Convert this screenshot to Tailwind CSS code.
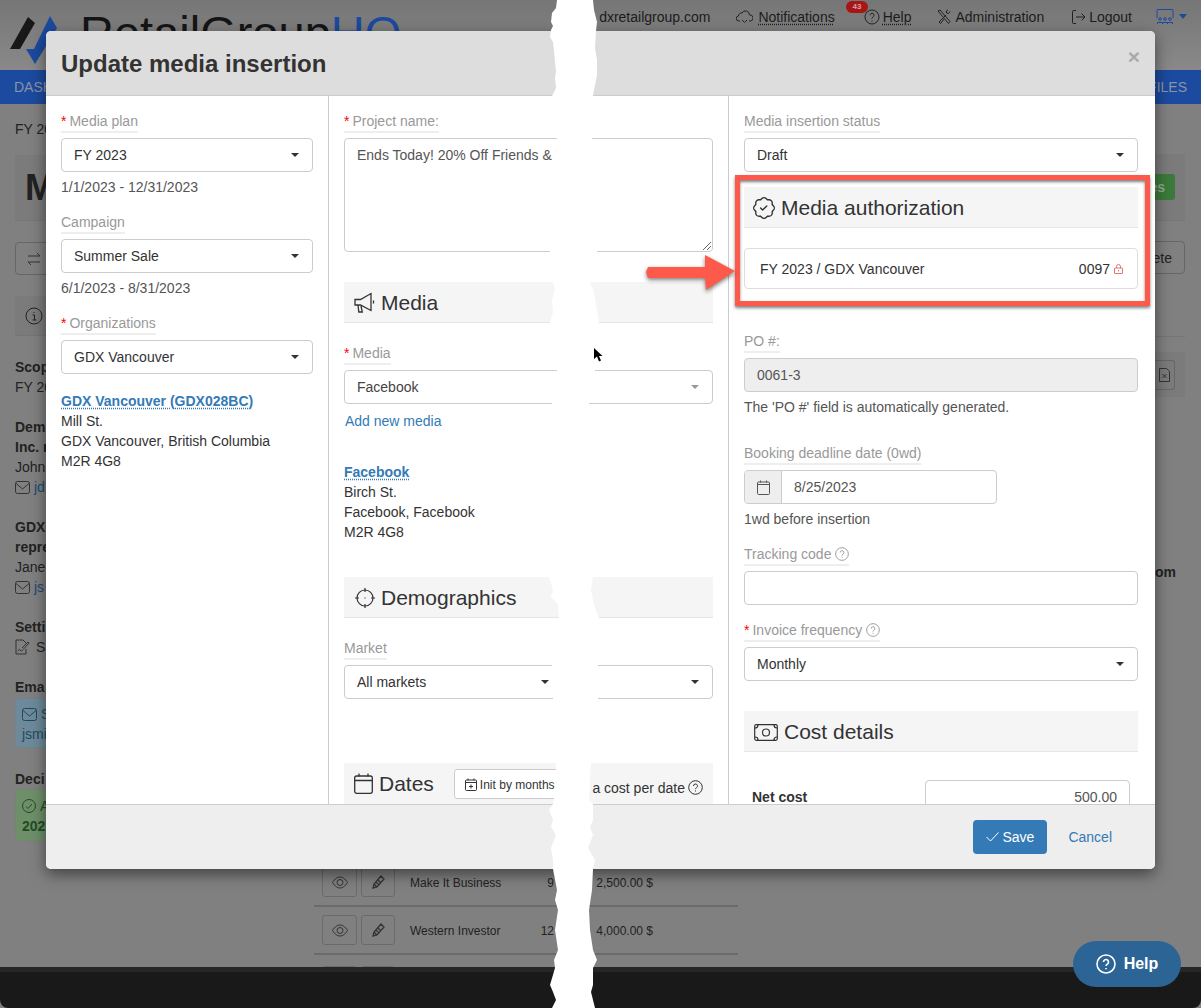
<!DOCTYPE html>
<html lang="en">
<head>
    <meta charset="UTF-8">
    <meta name="viewport" content="width=device-width, initial-scale=1.0">
    <title>Update media insertion</title>
    <script src="https://cdn.jsdelivr.net/npm/@tailwindcss/browser@4"></script>
</head>
<body class="bg-white">
<div class="relative w-[1201px] h-[1008px] overflow-hidden bg-[#808080] font-['Liberation_Sans',Arial,sans-serif] text-[14px] leading-[20px] text-[#222]">

    <!-- page behind the dialog -->
    <header class="h-[70px] flex bg-linear-to-b from-[#767676] to-[#898989] pl-[10px] pr-[14px]">
        <svg class="mt-0 w-[60px] h-[70px] shrink-0" viewBox="0 0 60 70">
            <polygon points="0,49 18,17 25,23 10,49" fill="#181818"/>
            <polygon points="16,49 24,49 40,16 47,28 25,64" fill="#1c4a9e"/>
        </svg>
        <div class="ml-[10px] mt-[6px] text-[47px] leading-[54px] text-[#151515] whitespace-nowrap">RetailGroup<span class="text-[#1c4a9e]">HQ</span></div>
        <div class="ml-auto flex items-start pt-[7px] text-[#1c1c1c]">
            <span class="mr-[26px]">dxretailgroup.com</span>
            <svg class="w-[17px] h-[17px] mt-[1px] mr-[5px]" viewBox="0 0 17 17" fill="none" stroke="#222"><path d="M4 13H3a2.5 2.5 0 0 1-.5-5A3 3 0 0 1 6 5a4 4 0 0 1 7.5 2 3 3 0 0 1 1 6H13M6 12l2.500 2.500L11 12"/></svg>
            <span class="underline decoration-dotted underline-offset-2 mr-[29px]">Notifications</span>
            <svg class="w-[16px] h-[16px] mt-[2px] mr-[3px]" viewBox="0 0 16 16" fill="none" stroke="#222"><circle cx="8" cy="8" r="7"/><path d="M6 6.200a2 2 0 1 1 3 1.800c-.7.400-1 .8-1 1.600M8 11.500v1"/></svg>
            <span class="underline decoration-dotted underline-offset-2 mr-[26px]">Help</span>
            <svg class="w-[15px] h-[16px] mt-[2px] mr-[3px]" viewBox="0 0 15 16" fill="none" stroke="#222"><path d="M1 2l2-1 10 11.500-1.500 2L1 2zM13 2.500l-1.500 2-2-.5-.2-2L11 .8M9 6l-7 7 1.500 1.500L7 10"/></svg>
            <span class="mr-[27px]">Administration</span>
            <svg class="w-[15px] h-[16px] mt-[2px] mr-[3px]" viewBox="0 0 15 16" fill="none" stroke="#222"><path d="M5 1.500H2.500a1 1 0 0 0-1 1v11a1 1 0 0 0 1 1H5M5 8h9M10.500 4.500 14 8l-3.500 3.500"/></svg>
            <span class="mr-[24px]">Logout</span>
            <svg class="w-[18px] h-[18px] mt-[1px] mr-[5px]" viewBox="0 0 18 18" fill="none" stroke="#1c4a9e"><path d="M1 10V2.500a1 1 0 0 1 1-1h14a1 1 0 0 1 1 1V10"/><circle cx="4" cy="11" r="1.300"/><circle cx="9" cy="11" r="1.300"/><circle cx="14" cy="11" r="1.300"/><path d="M1.500 16v-1.500h5V16M6.500 16v-1.500h5V16M11.500 16v-1.500h5V16"/></svg>
            <span class="mt-[7px] border-x-[4px] border-t-[5px] border-x-transparent border-t-[#1c4a9e]"></span>
        </div>
    </header>

    <nav class="h-[34px] bg-[#1c4a9e] flex items-center justify-between pl-[14px] pr-[14px] text-[#8a93a8]">
        <span>DASH</span>
        <span>FILES</span>
    </nav>

    <main class="h-[863px] overflow-hidden flex pl-[15px]">
        <div class="w-[285px] shrink-0 pt-[15px]">
            <p>FY 20</p>
            <div class="mt-[16px] h-[66px] border-b border-[#757575] bg-[#7b7b7b] pl-[10px] flex items-center text-[36px] font-bold">M</div>
            <div class="mt-[21px] w-[100px] h-[33px] border border-[#666] rounded-[4px] flex items-center pl-[11px]">
                <svg class="w-[14px] h-[14px]" viewBox="0 0 14 14" fill="none" stroke="#333"><path d="M1 4h12M10 1l3 3M13 10H1M4 13l-3-3"/></svg>
            </div>
            <div class="mt-[21px] h-[40px] border-b border-[#757575] bg-[#7b7b7b] pl-[10px] flex items-center">
                <svg class="w-[18px] h-[18px]" viewBox="0 0 18 18" fill="none" stroke="#222"><circle cx="9" cy="9" r="8"/><path d="M7.500 8H9.500V13M7.500 13h4M9 5v1"/></svg>
            </div>
            <p class="mt-[21px] font-bold">Scop</p>
            <p>FY 20</p>
            <p class="mt-[20px] font-bold">Dem<br>Inc. r</p>
            <p>John</p>
            <p class="flex items-center"><svg class="w-[15px] h-[13px] mr-[4px]" viewBox="0 0 15 13" fill="none" stroke="#333"><rect x=".5" y=".5" width="14" height="12" rx="2"/><path d="M1 2.500 7.500 8 14 2.500"/></svg><span class="text-[#1c4a70]">jd</span></p>
            <p class="mt-[20px] font-bold">GDX<br>repre</p>
            <p>Jane</p>
            <p class="flex items-center"><svg class="w-[15px] h-[13px] mr-[4px]" viewBox="0 0 15 13" fill="none" stroke="#333"><rect x=".5" y=".5" width="14" height="12" rx="2"/><path d="M1 2.500 7.500 8 14 2.500"/></svg><span class="text-[#1c4a70]">js</span></p>
            <p class="mt-[20px] font-bold">Setti</p>
            <p class="flex items-center"><svg class="w-[15px] h-[16px] mr-[6px]" viewBox="0 0 15 16" fill="none" stroke="#333"><path d="M11 10v5H1V1h7l3 3M3 12c1-2 2-2 2.500-.5S8 11 14 4l-1-1-6 6"/></svg>S</p>
            <p class="mt-[20px] font-bold">Ema</p>
            <div class="mt-[1px] h-[50px] px-[6px] py-[5px] rounded-[4px] border border-[#6c8494] bg-[#6e8a9a] text-[#1d4a60]">
                <p class="flex items-center"><svg class="w-[15px] h-[13px] mr-[4px]" viewBox="0 0 15 13" fill="none" stroke="#1d4a60"><rect x=".5" y=".5" width="14" height="12" rx="2"/><path d="M1 2.500 7.500 8 14 2.500"/></svg>S</p>
                <p>jsmi</p>
            </div>
            <p class="mt-[21px] font-bold">Deci</p>
            <div class="h-[52px] px-[6px] py-[6px] rounded-[4px] border border-[#6f8a6a] bg-[#6f8f6b] text-[#1f4d1f]">
                <p class="flex items-center"><svg class="w-[14px] h-[14px] mr-[4px]" viewBox="0 0 14 14" fill="none" stroke="#1f4d1f"><circle cx="7" cy="7" r="6.500"/><path d="M4 7.500l2 2 4-4.500"/></svg>A</p>
                <p class="font-bold">202</p>
            </div>
        </div>

        <div class="w-[424px] shrink-0 ml-[14px] pt-[755px] text-[12px]">
            <div class="h-[48px] border-b-2 border-[#6b6b6b] flex items-center px-[8px]">
                <span class="w-[35px] h-[30px] border border-[#6a6a6a] rounded-[3px] flex items-center justify-center"><svg class="w-[16px] h-[13px]" viewBox="0 0 16 13" fill="none" stroke="#333"><path d="M.5 6.500C3 2.500 5.500 1 8 1s5 1.500 7.500 5.500C13 10.500 10.500 12 8 12S3 10.500 .5 6.500z"/><circle cx="8" cy="6.500" r="3"/></svg></span>
                <span class="ml-[4px] w-[34px] h-[30px] border border-[#6a6a6a] rounded-[3px] flex items-center justify-center"><svg class="w-[13px] h-[14px]" viewBox="0 0 13 14" fill="none" stroke="#333" stroke-width="1.300"><path d="M1 13l1-4 7-8 3 3-7 8-4 1zM2 9l3 3M4 7l3 3M6 5l3 3"/></svg></span>
                <span class="mt-[1px] ml-[15px] w-[110px]">Make It Business</span>
                <span class="mt-[1px] w-[48px] text-right">9 %</span>
                <span class="mt-[1px] w-[85px] text-right">2,500.00 $</span>
            </div>
            <div class="h-[48px] border-b-2 border-[#6b6b6b] flex items-center px-[8px]">
                <span class="w-[35px] h-[30px] border border-[#6a6a6a] rounded-[3px] flex items-center justify-center"><svg class="w-[16px] h-[13px]" viewBox="0 0 16 13" fill="none" stroke="#333"><path d="M.5 6.500C3 2.500 5.500 1 8 1s5 1.500 7.500 5.500C13 10.500 10.500 12 8 12S3 10.500 .5 6.500z"/><circle cx="8" cy="6.500" r="3"/></svg></span>
                <span class="ml-[4px] w-[34px] h-[30px] border border-[#6a6a6a] rounded-[3px] flex items-center justify-center"><svg class="w-[13px] h-[14px]" viewBox="0 0 13 14" fill="none" stroke="#333" stroke-width="1.300"><path d="M1 13l1-4 7-8 3 3-7 8-4 1zM2 9l3 3M4 7l3 3M6 5l3 3"/></svg></span>
                <span class="mt-[1px] ml-[15px] w-[110px]">Western Investor</span>
                <span class="mt-[1px] w-[48px] text-right">12 %</span>
                <span class="mt-[1px] w-[85px] text-right">4,000.00 $</span>
            </div>
            <div class="h-[48px] flex items-start pt-[11px] px-[8px]">
                <span class="w-[35px] h-[30px] border border-[#6a6a6a] rounded-[3px]"></span>
                <span class="ml-[4px] w-[34px] h-[30px] border border-[#6a6a6a] rounded-[3px]"></span>
            </div>
        </div>

        <div class="w-[448px] shrink-0 pt-[50px] pr-[1px]">
            <div class="h-[67px] bg-[#7b7b7b] border-b border-[#757575] flex items-center justify-end pr-[10px]">
                <span class="h-[26px] px-[10px] rounded-[3px] bg-[#3c7a3c] text-[#8fa98f] font-bold flex items-center">es</span>
            </div>
            <div class="mt-[20px] flex justify-end">
                <span class="h-[33px] pl-[10px] pr-[12px] border border-[#666] rounded-[4px] flex items-center">ete</span>
            </div>
            <div class="mt-[62px] h-[1px] bg-[#757575]"></div>
            <div class="mt-[15px] h-[45px] bg-[#7b7b7b] flex items-center justify-end pr-[10px]">
                <span class="w-[20px] h-[30px] border border-[#666] border-l-0 rounded-r-[3px] flex items-center justify-center"><svg class="w-[11px] h-[14px]" viewBox="0 0 11 14" fill="none" stroke="#333"><path d="M.5.5h7l3 3v10H.5zM3.500 6l4 4M7.500 6l-4 4"/></svg></span>
            </div>
            <p class="mt-[165px] pr-[9px] text-right font-bold">com</p>
        </div>
    </main>

    <footer class="h-[41px] rounded-b-[8px] bg-[#191919] border-t-[5px] border-[#262626]"></footer>

    <!-- dialog -->
    <div class="absolute left-[46px] top-[31px] w-[1109px] h-[838px] flex flex-col bg-white rounded-[5px] overflow-hidden shadow-[0_5px_15px_rgba(0,0,0,0.5)]">
        <div class="h-[65px] shrink-0 bg-[#ddd] border-b border-[#ccc] flex items-center justify-between pl-[15px] pr-[15px]">
            <h1 class="mt-[2px] text-[24px] font-bold text-[#333]">Update media insertion</h1>
            <span class="-mt-[12px] text-[21px] font-bold text-[#aaa]">×</span>
        </div>

        <div class="h-[708px] shrink-0 overflow-hidden flex text-[#333]">
            <!-- left column -->
            <section class="w-[283px] shrink-0 border-r border-[#ccc] px-[15px] pt-[15px]">
                <label class="inline-block align-top border-b-2 border-[#eee] text-[#999]"><span class="text-[#f00] mr-[3px]">*</span>Media plan</label>
                <div class="mt-[5px] h-[34px] border border-[#ccc] rounded-[4px] flex items-center justify-between pl-[12px] pr-[13px]">FY 2023<span class="border-x-[4px] border-t-[4px] border-x-transparent border-t-[#333]"></span></div>
                <p class="mt-[5px] text-[#555]">1/1/2023 - 12/31/2023</p>

                <label class="mt-[15px] inline-block align-top border-b-2 border-[#eee] text-[#999]">Campaign</label>
                <div class="mt-[5px] h-[34px] border border-[#ccc] rounded-[4px] flex items-center justify-between pl-[12px] pr-[13px]">Summer Sale<span class="border-x-[4px] border-t-[4px] border-x-transparent border-t-[#333]"></span></div>
                <p class="mt-[5px] text-[#555]">6/1/2023 - 8/31/2023</p>

                <label class="mt-[15px] inline-block align-top border-b-2 border-[#eee] text-[#999]"><span class="text-[#f00] mr-[3px]">*</span>Organizations</label>
                <div class="mt-[5px] h-[34px] border border-[#ccc] rounded-[4px] flex items-center justify-between pl-[12px] pr-[13px]">GDX Vancouver<span class="border-x-[4px] border-t-[4px] border-x-transparent border-t-[#333]"></span></div>

                <p class="mt-[17px]"><a class="font-bold text-[#337ab7] underline decoration-dotted underline-offset-2">GDX Vancouver (GDX028BC)</a></p>
                <p>Mill St.</p>
                <p>GDX Vancouver, British Columbia</p>
                <p>M2R 4G8</p>
            </section>

            <!-- middle column -->
            <section class="w-[400px] shrink-0 border-r border-[#ccc] px-[15px] pt-[15px]">
                <label class="inline-block align-top border-b-2 border-[#eee] text-[#999]"><span class="text-[#f00] mr-[3px]">*</span>Project name:</label>
                <div class="relative mt-[5px] h-[114px] border border-[#ccc] rounded-[4px] px-[12px] py-[6px] text-[#555]">Ends Today! 20% Off Friends &amp; Fam
                    <svg class="absolute right-[1px] bottom-[1px] w-[9px] h-[9px]" viewBox="0 0 9 9" stroke="#666"><path d="M1 9l8-8M5 9l4-4"/></svg>
                </div>

                <div class="mt-[30px] h-[41px] pt-[2px] bg-[#f5f5f5] border-b border-[#e5e5e5] flex items-center pl-[10px] text-[21px] text-[#333]">
                    <svg class="w-[22px] h-[22px] mr-[5px]" viewBox="0 0 22 22" fill="none" stroke="#333" stroke-width="1.300"><path d="M1 7.500h5.500L17 1.500v17L6.500 13H1zM4 13l.8 7h3.500L7 14M19.500 8.500v3"/></svg>Media
                </div>

                <label class="mt-[20px] inline-block align-top border-b-2 border-[#eee] text-[#999]"><span class="text-[#f00] mr-[3px]">*</span>Media</label>
                <div class="mt-[5px] h-[34px] border border-[#ccc] rounded-[4px] flex items-center justify-between pl-[12px] pr-[13px] text-[#444]">Facebook<span class="border-x-[4px] border-t-[4px] border-x-transparent border-t-[#999]"></span></div>
                <p class="mt-[7px] pl-[1px] text-[#337ab7]">Add new media</p>

                <p class="mt-[31px]"><a class="font-bold text-[#337ab7] underline decoration-dotted underline-offset-2">Facebook</a></p>
                <p>Birch St.</p>
                <p>Facebook, Facebook</p>
                <p>M2R 4G8</p>

                <div class="mt-[35px] h-[41px] pt-[2px] bg-[#f5f5f5] border-b border-[#e5e5e5] flex items-center pl-[11px] text-[21px] text-[#333]">
                    <svg class="w-[20px] h-[20px] mr-[6px]" viewBox="0 0 20 20" fill="none" stroke="#333" stroke-width="1.200"><circle cx="10" cy="10" r="8"/><path d="M10 0v4M10 16v4M0 10h4M16 10h4M10 9.500v1"/></svg>Demographics
                </div>

                <label class="mt-[20px] inline-block align-top border-b-2 border-[#eee] text-[#999]">Market</label>
                <div class="mt-[5px] flex gap-[30px]">
                    <div class="w-[216px] h-[34px] border border-[#ccc] rounded-[4px] flex items-center justify-between pl-[12px] pr-[7px]">All markets<span class="-translate-x-[3px] border-x-[4px] border-t-[4px] border-x-transparent border-t-[#333]"></span></div>
                    <div class="grow h-[34px] border border-[#ccc] rounded-[4px] flex items-center justify-end pr-[13px]"><span class="border-x-[4px] border-t-[4px] border-x-transparent border-t-[#333]"></span></div>
                </div>

                <div class="mt-[64px] h-[41px] bg-[#f5f5f5] flex items-center pl-[10px] pr-[10px] text-[21px] text-[#333]">
                    <svg class="w-[19px] h-[21px] mr-[6px]" viewBox="0 0 19 21" fill="none" stroke="#333" stroke-width="1.300"><rect x=".7" y="3" width="17.600" height="17.300" rx="2"/><path d="M.7 7.500h17.600M5 .5v3M14 .5v3"/></svg>Dates
                    <span class="ml-[20px] w-[130px] h-[30px] border border-[#ccc] rounded-[3px] bg-white flex items-center pl-[10px] pt-[2px] text-[12px] leading-none whitespace-nowrap">
                        <svg class="w-[12px] h-[13px] mr-[3px]" viewBox="0 0 12 13" fill="none" stroke="#333"><rect x=".5" y="2" width="11" height="10.500" rx="1"/><path d="M.5 4.500h11M3 .5v2M9 .5v2M6 6.500v4M4 8.500h4"/></svg>Init by months
                    </span>
                    <span class="ml-auto mt-[8px] flex items-center text-[14px]">a cost per date
                        <svg class="ml-[3px] w-[15px] h-[15px]" viewBox="0 0 15 15" fill="none" stroke="#333"><circle cx="7.500" cy="7.500" r="6.800"/><path d="M5.500 6a2 2 0 1 1 3 1.700c-.7.400-1 .7-1 1.500M7.500 10.500v1"/></svg>
                    </span>
                </div>
            </section>

            <!-- right column -->
            <section class="w-[426px] shrink-0 pl-[15px] pr-[17px] pt-[15px]">
                <label class="inline-block align-top border-b-2 border-[#eee] text-[#999]">Media insertion status</label>
                <div class="mt-[5px] h-[34px] border border-[#ccc] rounded-[4px] flex items-center justify-between pl-[12px] pr-[13px]">Draft<span class="border-x-[4px] border-t-[4px] border-x-transparent border-t-[#333]"></span></div>

                <div class="mt-[15px] h-[41px] pt-[1px] bg-[#f5f5f5] border-b border-[#e5e5e5] flex items-center pl-[9px] text-[21px] text-[#333]">
                    <svg class="w-[22px] h-[22px] mr-[6px]" viewBox="0 0 16 16" fill="#333"><path d="M10.354 6.146a.5.5 0 0 1 0 .708l-3 3a.5.5 0 0 1-.708 0l-1.500-1.500a.5.5 0 1 1 .708-.708L7 8.793l2.646-2.647a.5.5 0 0 1 .708 0z"/><path d="m10.273 2.513-.921-.944.715-.698.622.637.89-.011a2.890 2.890 0 0 1 2.924 2.924l-.01.89.636.622a2.890 2.890 0 0 1 0 4.134l-.637.622.011.89a2.890 2.890 0 0 1-2.924 2.924l-.89-.01-.622.636a2.890 2.890 0 0 1-4.134 0l-.622-.637-.89.011a2.890 2.890 0 0 1-2.924-2.924l.01-.89-.636-.622a2.890 2.890 0 0 1 0-4.134l.637-.622-.011-.89a2.890 2.890 0 0 1 2.924-2.924l.89.01.622-.636a2.890 2.890 0 0 1 4.134 0l-.715.698a1.890 1.890 0 0 0-2.704 0l-.92.944-1.320-.016a1.890 1.890 0 0 0-1.911 1.912l.016 1.318-.944.921a1.890 1.890 0 0 0 0 2.704l.944.92-.016 1.320a1.890 1.890 0 0 0 1.912 1.911l1.318-.016.921.944a1.890 1.890 0 0 0 2.704 0l.92-.944 1.320.016a1.890 1.890 0 0 0 1.911-1.912l-.016-1.318.944-.921a1.890 1.890 0 0 0 0-2.704l-.944-.92.016-1.320a1.890 1.890 0 0 0-1.912-1.911l-1.318.016z"/></svg>Media authorization
                </div>
                <div class="mt-[20px] h-[41px] border border-[#ddd] rounded-[4px] flex items-center justify-between pl-[15px] pr-[14px]">
                    <span>FY 2023 / GDX Vancouver</span>
                    <span class="flex items-center">0097<svg class="ml-[4px] w-[9px] h-[10px]" viewBox="0 0 9 10" fill="none" stroke="#d9534f" stroke-width=".8"><rect x=".5" y="4" width="8" height="5.500" rx=".5"/><path d="M2.500 4V2.500a2 2 0 0 1 4 0V4M4.500 6v1.500"/></svg></span>
                </div>

                <label class="mt-[42px] inline-block align-top border-b-2 border-[#eee] text-[#999]">PO #:</label>
                <div class="mt-[5px] h-[34px] border border-[#ccc] rounded-[4px] bg-[#eee] flex items-center pl-[12px] text-[#555]">0061-3</div>
                <p class="mt-[5px] text-[#555]">The 'PO #' field is automatically generated.</p>

                <label class="mt-[26px] inline-block align-top border-b-2 border-[#eee] text-[#999]">Booking deadline date (0wd)</label>
                <div class="mt-[5px] w-[253px] h-[34px] border border-[#ccc] rounded-[4px] flex overflow-hidden text-[#555]">
                    <span class="w-[37px] bg-[#eee] border-r border-[#ccc] flex items-center justify-center">
                        <svg class="w-[13px] h-[15px]" viewBox="0 0 13 15" fill="none" stroke="#555"><rect x=".5" y="2" width="12" height="12.500" rx="1"/><path d="M.5 4.500h12M3.500 .5v2M9.500 .5v2"/></svg>
                    </span>
                    <span class="pl-[12px] flex items-center">8/25/2023</span>
                </div>
                <p class="mt-[5px] text-[#555]">1wd before insertion</p>

                <label class="mt-[15px] inline-flex items-center align-top border-b-2 border-[#eee] text-[#999]">Tracking code
                    <svg class="ml-[4px] w-[14px] h-[14px]" viewBox="0 0 15 15" fill="none" stroke="#999"><circle cx="7.500" cy="7.500" r="6.800"/><path d="M5.500 6a2 2 0 1 1 3 1.700c-.7.400-1 .7-1 1.500M7.500 10.500v1"/></svg>
                </label>
                <div class="mt-[5px] h-[34px] border border-[#ccc] rounded-[4px]"></div>

                <label class="mt-[15px] inline-flex items-center align-top border-b-2 border-[#eee] text-[#999]"><span class="text-[#f00] mr-[3px]">*</span>Invoice frequency
                    <svg class="ml-[4px] w-[14px] h-[14px]" viewBox="0 0 15 15" fill="none" stroke="#999"><circle cx="7.500" cy="7.500" r="6.800"/><path d="M5.500 6a2 2 0 1 1 3 1.700c-.7.400-1 .7-1 1.500M7.500 10.500v1"/></svg>
                </label>
                <div class="mt-[5px] h-[34px] border border-[#ccc] rounded-[4px] flex items-center justify-between pl-[12px] pr-[13px]">Monthly<span class="border-x-[4px] border-t-[4px] border-x-transparent border-t-[#333]"></span></div>

                <div class="mt-[30px] h-[41px] pt-[2px] bg-[#f5f5f5] border-b border-[#e5e5e5] flex items-center pl-[10px] text-[21px] text-[#333]">
                    <svg class="w-[24px] h-[17px] mr-[6px]" viewBox="0 0 24 17" fill="none" stroke="#333" stroke-width="1.200"><rect x=".7" y=".7" width="22.600" height="15.600" rx="1.500"/><circle cx="12" cy="8.500" r="3.500"/><path d="M1 4c2 0 3-1 3-3M23 4c-2 0-3-1-3-3M1 13c2 0 3 1 3 3M23 13c-2 0-3 1-3 3"/></svg>Cost details
                </div>
                <div class="mt-[28px] flex items-start pl-[8px] pr-[8px]">
                    <span class="pt-[7px] font-bold">Net cost</span>
                    <div class="ml-auto w-[205px] h-[34px] border border-[#ccc] rounded-[4px] flex items-center justify-end pr-[12px] text-[#555]">500.00</div>
                </div>
            </section>
        </div>

        <div class="h-[65px] shrink-0 bg-[#eee] border-t border-[#ccc] flex items-center justify-end pr-[43px]">
            <span class="w-[74px] h-[34px] rounded-[4px] bg-[#337ab7] text-white flex items-center justify-center">
                <svg class="w-[13px] h-[10px] mr-[3px]" viewBox="0 0 13 10" fill="none" stroke="#fff"><path d="M.5 5l4 4 8-8.500"/></svg>Save
            </span>
            <span class="ml-[21px] text-[#337ab7]">Cancel</span>
        </div>
    </div>

    <!-- annotation: red box and arrow -->
    <div class="absolute left-[735px] top-[175px] w-[415px] h-[131px] border-[5px] border-[#fd5a4c] shadow-[0_2px_3px_rgba(0,0,0,0.5),inset_0_2px_3px_rgba(0,0,0,0.5)]"></div>
    <svg class="absolute left-[644px] top-[252px] w-[94px] h-[42px] drop-shadow-[0_2px_2px_rgba(0,0,0,0.5)]" viewBox="0 0 94 42">
        <polygon points="4,15 61,15 61,3 91,19 62,38 61,26 4,26 2,20" fill="#fd5a4c"/>
    </svg>

    <!-- torn strip -->
    <svg class="absolute left-0 top-0 w-[1201px] h-[1008px]" viewBox="0 0 1201 1008">
        <polygon fill="#fff" points="557,0 556,8 552,13 551,22 553,26 551,30 550,37 553,42 554,50 555,62 556,72 555,78 556,88 552,96 557,140 550,252 553,282 555,290 552,300 553,312 550,322 557,370 552,403 549,577 553,590 551,597 558,605 559,618 552,665 553,699 556,763 556,780 554,800 553,804 549,810 553,820 551,827 556,835 551,848 553,860 553,869 557,890 555,900 558,910 555,930 558,950 554,960 555,968 550,985 553,992 556,1000 552,1008 595,1008 593,1000 591,992 593,985 593,968 597,960 593,950 590,930 589,910 592,890 593,869 595,860 588,848 593,835 590,827 593,820 593,804 589,800 590,780 591,763 598,699 598,665 599,618 594,605 591,590 593,577 589,403 595,370 599,322 596,305 594,292 590,282 597,252 592,138 593,96 594,90 597,75 597,60 595,48 596,31 597,22 594,10 593,0"/>
    </svg>

    <!-- mouse pointer -->
    <svg class="absolute left-[593px] top-[347px] w-[10px] h-[16px]" viewBox="0 0 10 16"><path d="M1 1v11l3-2.500 2 5 2-1-2-4.500h3.500z" fill="#000"/></svg>

    <!-- notification badge, over the header -->
    <span class="absolute left-[846px] top-[1px] w-[22px] h-[12px] rounded-full bg-[#a81515] text-[#d8a0a0] text-[8px] leading-[12px] text-center font-bold">43</span>

    <!-- floating help -->
    <div class="absolute left-[1073px] top-[941px] w-[108px] h-[46px] rounded-full bg-[#2c6496] text-white flex items-center justify-center text-[16px] font-bold">
        <svg class="w-[20px] h-[20px] mr-[8px]" viewBox="0 0 20 20" fill="none" stroke="#fff" stroke-width="1.600"><circle cx="10" cy="10" r="9"/><path d="M7.500 8a2.500 2.500 0 1 1 3.800 2.100c-.9.600-1.300 1-1.300 2M10 14v1.300"/></svg>Help
    </div>
</div>
</body>
</html>
